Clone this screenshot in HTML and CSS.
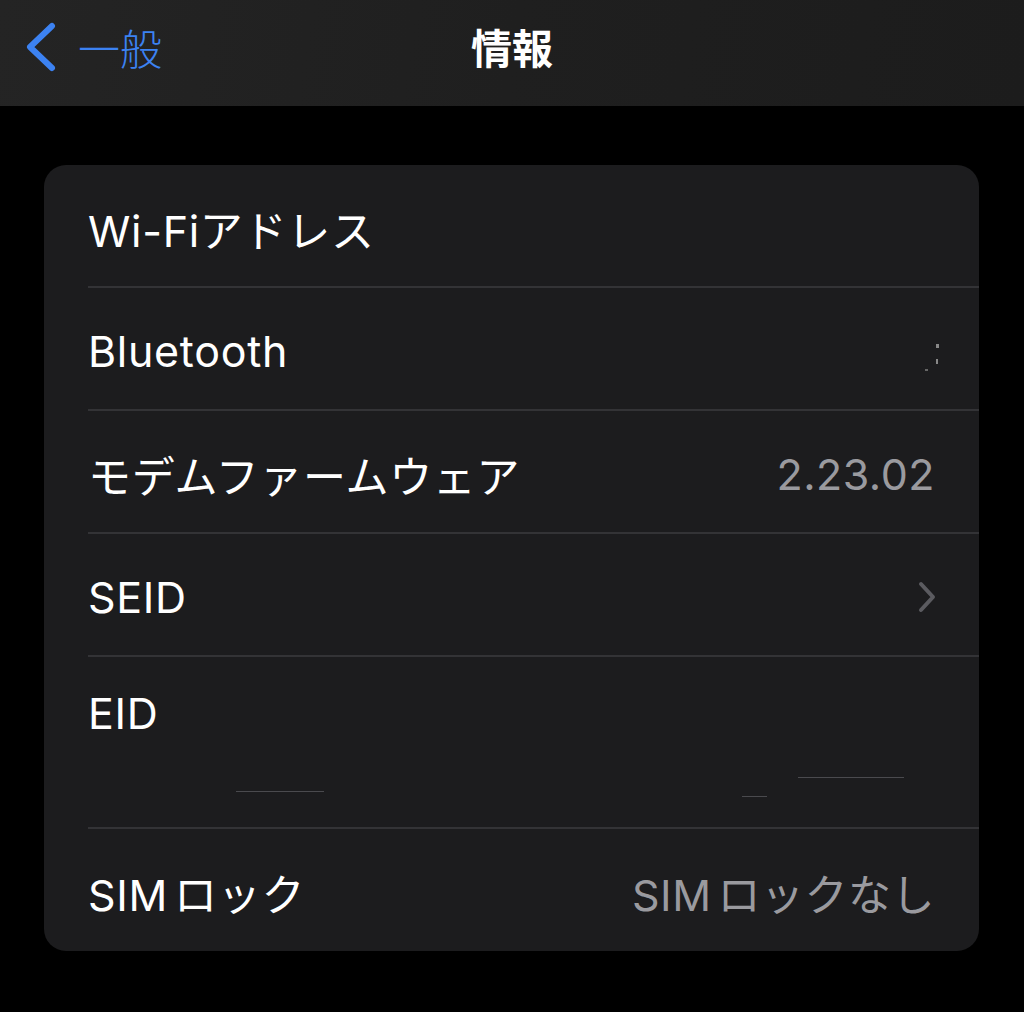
FILE: index.html
```html
<!DOCTYPE html>
<html lang="ja">
<head>
<meta charset="utf-8">
<link rel="stylesheet" href="styles.css">
</head>
<body>
<header class="nav">
  <div class="back">
    <svg class="chev" width="36" height="50" viewBox="0 0 36 50"><path d="M30 4 L8 25 L30 46" fill="none" stroke="#3c82f2" stroke-width="6" stroke-linecap="round" stroke-linejoin="round"/></svg>
    <span class="back-label">一般</span>
  </div>
  <h1 class="title">情報</h1>
</header>
<main class="content">
  <section class="card">
    <div class="row"><span class="label">Wi-Fiアドレス</span></div>
    <div class="row"><span class="label">Bluetooth</span><span class="specks"><i class="s1"></i><i class="s2"></i><i class="s3"></i></span></div>
    <div class="row"><span class="label">モデムファームウェア</span><span class="value">2.23.02</span></div>
    <div class="row"><span class="label">SEID</span>
      <svg class="disc" width="20" height="34" viewBox="0 0 20 34"><path d="M4 4 L16 17 L4 30" fill="none" stroke="#5b5b60" stroke-width="4" stroke-linecap="round" stroke-linejoin="round"/></svg>
    </div>
    <div class="row row-eid">
      <span class="label">EID</span>
      <div class="eid-lines">
        <i class="l1"></i><i class="l2"></i><i class="l3"></i>
      </div>
    </div>
    <div class="row"><span class="label">SIM<span class="gap"></span>ロック</span><span class="value">SIM<span class="gap"></span>ロックなし</span></div>
  </section>
</main>
</body>
</html>
```
FILE: styles.css
```css
* { box-sizing: border-box; margin: 0; padding: 0; }
html, body { background: #000; }
body {
  width: 1024px;
  height: 1012px;
  overflow: hidden;
  font-family: Inter, "Noto Sans CJK JP", sans-serif;
  color: #fff;
}
.nav {
  height: 106px;
  background: linear-gradient(100deg, #242424 0%, #1f1f1f 50%, #1c1c1c 100%);
  position: relative;
  display: flex;
  align-items: center;
  justify-content: center;
}
.back {
  position: absolute;
  left: 22px;
  top: 20px;
  display: flex;
  align-items: center;
  gap: 20px;
}
.back-label {
  color: #3c82f2;
  font-family: "Noto Sans CJK JP", sans-serif;
  font-size: 42px;
  font-weight: 300;
  line-height: 54px;
}
.title {
  font-family: "Noto Sans CJK JP", sans-serif;
  font-size: 41px;
  font-weight: 700;
  line-height: 54px;
  margin-top: -14px;
}
.content {
  padding: 59px 45px 0 44px;
}
.card {
  background: #1c1c1e;
  border-radius: 22px;
  padding-left: 44px;
  overflow: hidden;
}
.row {
  height: 123px;
  display: flex;
  align-items: center;
  justify-content: space-between;
  padding-right: 44px;
  padding-top: 4px;
  border-bottom: 2px solid #333336;
  position: relative;
}
.row:last-child { border-bottom: none; height: 122px; }
.label {
  font-size: 43px;
  font-weight: 400;
  letter-spacing: 0.7px;
  color: #fff;
}
.value {
  font-size: 43px;
  color: #9a9a9f;
  letter-spacing: 0.5px;
}
.gap { display: inline-block; width: 6px; }
.disc { margin-right: -2px; }
.row-eid {
  height: 172px;
  align-items: flex-start;
  padding-top: 30px;
}
.specks i, .eid-lines i {
  position: absolute;
  display: block;
  background: #4a4a4e;
}
.specks .s1 { right: 40px; top: 56px; width: 3px; height: 4px; background: #888; }
.specks .s2 { right: 41px; top: 71px; width: 2px; height: 5px; background: #888; }
.specks .s3 { right: 51px; top: 81px; width: 3px; height: 2px; background: #666; }
.eid-lines .l1 { left: 148px; top: 134px; width: 88px; height: 1px; }
.eid-lines .l2 { left: 710px; top: 120px; width: 106px; height: 1px; }
.eid-lines .l3 { left: 654px; top: 139px; width: 25px; height: 1px; }
```
